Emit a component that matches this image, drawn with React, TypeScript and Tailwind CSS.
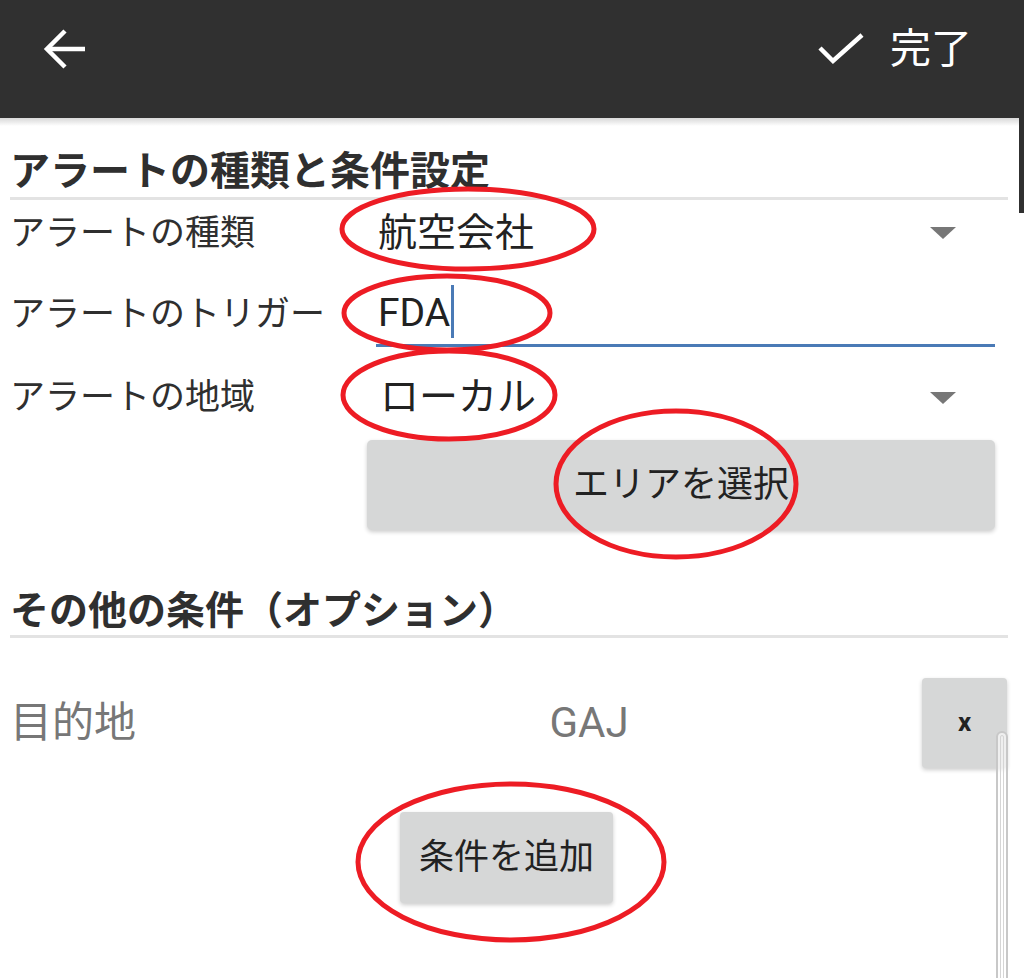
import React from "react";

const FONT = "[font-family:Roboto,'Noto_Sans_CJK_JP',sans-serif]";

function Triangle() {
  return (
    <svg width="26" height="12" viewBox="0 0 26 12" className="shrink-0">
      <polygon points="0,0 26,0 13,12" fill="#777777" />
    </svg>
  );
}

export default function App() {
  return (
    <div className={`relative w-[1024px] h-[978px] overflow-hidden bg-white ${FONT}`}>
      {/* Header */}
      <div className="h-[118px] bg-[#303030] flex items-start">
        <div className="h-[98px] w-full flex items-center justify-between pl-[43px] pr-[52px]">
          <svg width="44" height="40" viewBox="0 0 44 40" fill="none" stroke="white" strokeWidth="4.5" strokeLinecap="butt" strokeLinejoin="miter">
            <path d="M42 20 H4" />
            <path d="M22 2 L4 20 L22 38" />
          </svg>
          <div className="flex items-center">
            <svg width="46" height="32" viewBox="0 0 46 32" fill="none" stroke="white" strokeWidth="4.5">
              <path d="M2 15 L15 28 L44 2" />
            </svg>
            <span className="ml-[26px] text-[41px] text-white leading-none">完了</span>
          </div>
        </div>
      </div>
      {/* header shadow */}
      <div className="absolute left-0 top-[118px] w-[1019px] h-[8px] bg-gradient-to-b from-[#d8d8d8] to-white" />

      {/* Content */}
      <div className="pl-[10px] pr-[21px]">
        {/* Section 1 */}
        <div className="h-[82px] flex items-end pb-[5px] border-b-[3px] border-[#e3e3e3] mr-[-5px]">
          <span className="text-[40px] font-bold text-[#2f2f2f] leading-none">アラートの種類と条件設定</span>
        </div>

        {/* Row 1 */}
        <div className="h-[66px] flex items-center">
          <div className="w-[366px] text-[35px] text-[#2f2f2f] leading-none">アラートの種類</div>
          <div className="flex-1 flex items-center justify-between pl-[2px] pr-[47px]">
            <span className="text-[39px] text-[#222] leading-none">航空会社</span>
            <Triangle />
          </div>
        </div>

        {/* Row 2 */}
        <div className="h-[89px] flex items-start">
          <div className="w-[366px] h-[96px] flex items-center text-[35px] text-[#2f2f2f] leading-none">アラートのトリガー</div>
          <div className="flex-1 h-[81px] flex items-end border-b-[3px] border-[#4a7ab6] mr-[8px]">
            <span className="pl-[2px] mb-[11px] text-[39px] text-[#222] leading-none">FDA</span>
            <span className="ml-[1px] mb-[6px] w-[3px] h-[53px] bg-[#4a7ab6]" />
          </div>
        </div>

        {/* Row 3 */}
        <div className="h-[85px] flex items-center">
          <div className="w-[366px] text-[35px] text-[#2f2f2f] leading-none">アラートの地域</div>
          <div className="flex-1 flex items-center justify-between pl-[4px] pr-[47px]">
            <span className="text-[39px] text-[#222] leading-none">ローカル</span>
            <Triangle />
          </div>
        </div>

        {/* Area button */}
        <div className="flex">
          <div className="ml-[357px] w-[628px] h-[90px] rounded-[5px] bg-[#d6d7d7] shadow-[0_2px_4px_rgba(0,0,0,0.2)] flex items-center justify-center">
            <span className="text-[36px] text-[#222] leading-none">エリアを選択</span>
          </div>
        </div>

        {/* Section 2 */}
        <div className="mt-[54px] h-[54px] flex items-end pb-[4px] border-b-[3px] border-[#e3e3e3] mr-[-5px]">
          <span className="text-[39px] font-bold text-[#2f2f2f] leading-none">その他の条件（オプション）</span>
        </div>

        {/* Destination row */}
        <div className="mt-[40px] h-[90px] flex items-center">
          <span className="w-[360px] text-[42px] text-[#777] leading-none">目的地</span>
          <span className="flex-1 text-center pr-[114px] text-[42px] text-[#777] leading-none">GAJ</span>
          <div className="w-[85px] h-[90px] mr-[-4px] rounded-[4px] bg-[#d6d7d7] shadow-[0_2px_4px_rgba(0,0,0,0.2)] flex items-center justify-center">
            <span className="text-[26px] font-bold text-[#222] leading-none pb-[2px]">x</span>
          </div>
        </div>

        {/* Add condition button */}
        <div className="mt-[44px] flex">
          <div className="ml-[390px] w-[213px] h-[91px] rounded-[4px] bg-[#d6d7d7] shadow-[0_2px_4px_rgba(0,0,0,0.2)] flex items-center justify-center">
            <span className="text-[35px] text-[#222] leading-none">条件を追加</span>
          </div>
        </div>
      </div>

      {/* page scrollbar thumb */}
      <div className="absolute right-0 top-[118px] w-[5px] h-[95px] bg-[#303030]" />

      {/* inner scrollbar */}
      <div className="absolute left-[996px] top-[731px] w-[12px] h-[260px] rounded-t-[6px] border-[2px] border-[#c8c8c8] bg-white/60 p-[2px]">
        <div className="w-full h-full rounded-t-[4px] border-[1px] border-[#d5d5d5]" />
      </div>

      {/* red annotation ellipses */}
      <svg className="absolute inset-0 pointer-events-none" width="1024" height="978" viewBox="0 0 1024 978" fill="none" stroke="#ed1c24" strokeWidth="5">
        <ellipse cx="468" cy="229" rx="126" ry="40" />
        <ellipse cx="447" cy="313" rx="103" ry="37" />
        <ellipse cx="449" cy="395" rx="106" ry="44" />
        <ellipse cx="676" cy="484" rx="120" ry="73" />
        <ellipse cx="511" cy="862" rx="153" ry="78" />
      </svg>
    </div>
  );
}
